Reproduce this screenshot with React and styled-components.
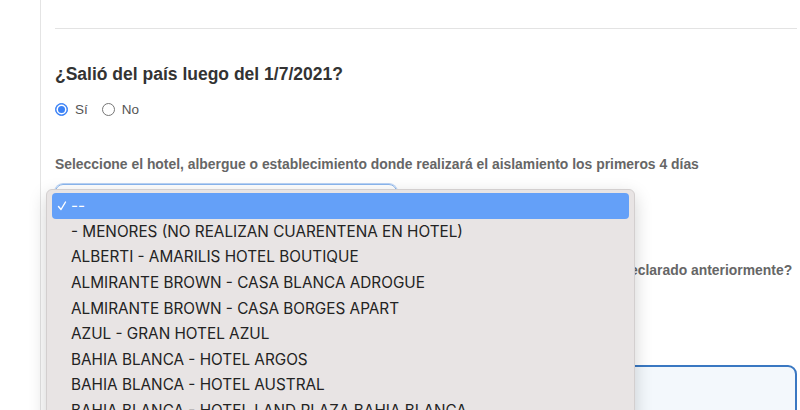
import React from "react";
import styled, { createGlobalStyle } from "styled-components";

const Global = createGlobalStyle`
  html, body { margin: 0; padding: 0; background: #fff; overflow: hidden; }
  body { font-family: "Liberation Sans", Arial, sans-serif; }
`;

const Page = styled.div`
  position: relative;
  width: 800px;
  height: 410px;
  overflow: hidden;
  padding-left: 40px;
  box-sizing: border-box;
`;

const Container = styled.div`
  border-left: 1px solid #e4e4e4;
  padding: 28px 3px 0 14px;
  height: 100%;
  box-sizing: border-box;
`;

const Rule = styled.hr`
  margin: 0;
  border: 0;
  border-top: 1px solid #e3e3e3;
`;

const Heading = styled.h2`
  margin: 35px 0 0;
  font-size: 17.5px;
  line-height: 20px;
  font-weight: 700;
  color: #333;
`;

const RadioRow = styled.div`
  display: flex;
  align-items: center;
  gap: 14px;
  margin-top: 17px;
  height: 16px;
`;

const RadioOption = styled.label`
  display: flex;
  align-items: center;
  gap: 7px;
  font-size: 13.5px;
  color: #555;
`;

const RadioDot = styled.span`
  width: 13px;
  height: 13px;
  border-radius: 50%;
  box-sizing: border-box;
  border: ${(p) => (p.$checked ? "1px solid #3b82f6" : "1px solid #767676")};
  background: ${(p) => (p.$checked ? "#3b82f6" : "#fff")};
  display: flex;
  align-items: center;
  justify-content: center;
  &::after {
    content: "";
    width: 7px;
    height: 7px;
    border-radius: 50%;
    display: ${(p) => (p.$checked ? "block" : "none")};
    background: #3b82f6;
    box-shadow: 0 0 0 1.5px #fff;
  }
`;

const FieldLabel = styled.div`
  font-size: 13.9px;
  line-height: 16px;
  font-weight: 700;
  color: #666;
  margin-top: ${(p) => p.$top}px;
  white-space: nowrap;
`;

const SelectBox = styled.div`
  margin-top: 12px;
  width: 342px;
  height: 30px;
  border: 1px solid #8ab6ee;
  border-radius: 8px;
  box-shadow: 0 0 0 1px #b9d3f5;
  box-sizing: border-box;
`;

const InfoBox = styled.div`
  margin-top: 87px;
  height: 80px;
  border: 2px solid #3a78c2;
  border-radius: 9px;
  background: #f3f8fc;
`;

const Menu = styled.div`
  position: absolute;
  left: 46px;
  top: 189px;
  width: 589px;
  height: 260px;
  box-sizing: border-box;
  background: #e8e4e4;
  border: 1px solid #d3cfcf;
  border-radius: 6px;
  box-shadow: 0 6px 18px rgba(0, 0, 0, 0.18);
  padding: 3px 5px;
  font-family: Inter, "Noto Sans", sans-serif;
`;

const Item = styled.div`
  height: 25.6px;
  display: flex;
  align-items: center;
  padding-left: 19px;
  position: relative;
  font-size: 15.3px;
  color: ${(p) => (p.$selected ? "#fff" : "#232323")};
  background: ${(p) => (p.$selected ? "#64a0f8" : "transparent")};
  border-radius: 4px;
  white-space: nowrap;
`;

const Check = styled.span`
  position: absolute;
  left: 5px;
  top: 7px;
  display: flex;
`;

const items = [
  "- MENORES (NO REALIZAN CUARENTENA EN HOTEL)",
  "ALBERTI - AMARILIS HOTEL BOUTIQUE",
  "ALMIRANTE BROWN - CASA BLANCA ADROGUE",
  "ALMIRANTE BROWN - CASA BORGES APART",
  "AZUL - GRAN HOTEL AZUL",
  "BAHIA BLANCA - HOTEL ARGOS",
  "BAHIA BLANCA - HOTEL AUSTRAL",
  "BAHIA BLANCA - HOTEL LAND PLAZA BAHIA BLANCA",
];

export default function App() {
  return (
    <>
      <Global />
      <Page>
        <Container>
          <Rule />
          <Heading>¿Salió del país luego del 1/7/2021?</Heading>
          <RadioRow>
            <RadioOption>
              <RadioDot $checked />
              Sí
            </RadioOption>
            <RadioOption>
              <RadioDot />
              No
            </RadioOption>
          </RadioRow>
          <FieldLabel $top={39}>
            Seleccione el hotel, albergue o establecimiento donde realizará el aislamiento los primeros 4 días
          </FieldLabel>
          <SelectBox />
          <FieldLabel $top={48}>
            ¿En los últimos 14 días estuvo usted en algún país o ciudad distintos a los que ya ha declarado anteriormente?
          </FieldLabel>
          <InfoBox />
        </Container>
        <Menu>
          <Item $selected>
            <Check>
              <svg width="10" height="12" viewBox="0 0 10 12">
                <path d="M1.5 6.5 L4 9.5 L8.5 2" fill="none" stroke="#fff" strokeWidth="1.4" strokeLinecap="round" strokeLinejoin="round" />
              </svg>
            </Check>
            --
          </Item>
          {items.map((t) => (
            <Item key={t}>{t}</Item>
          ))}
        </Menu>
      </Page>
    </>
  );
}
